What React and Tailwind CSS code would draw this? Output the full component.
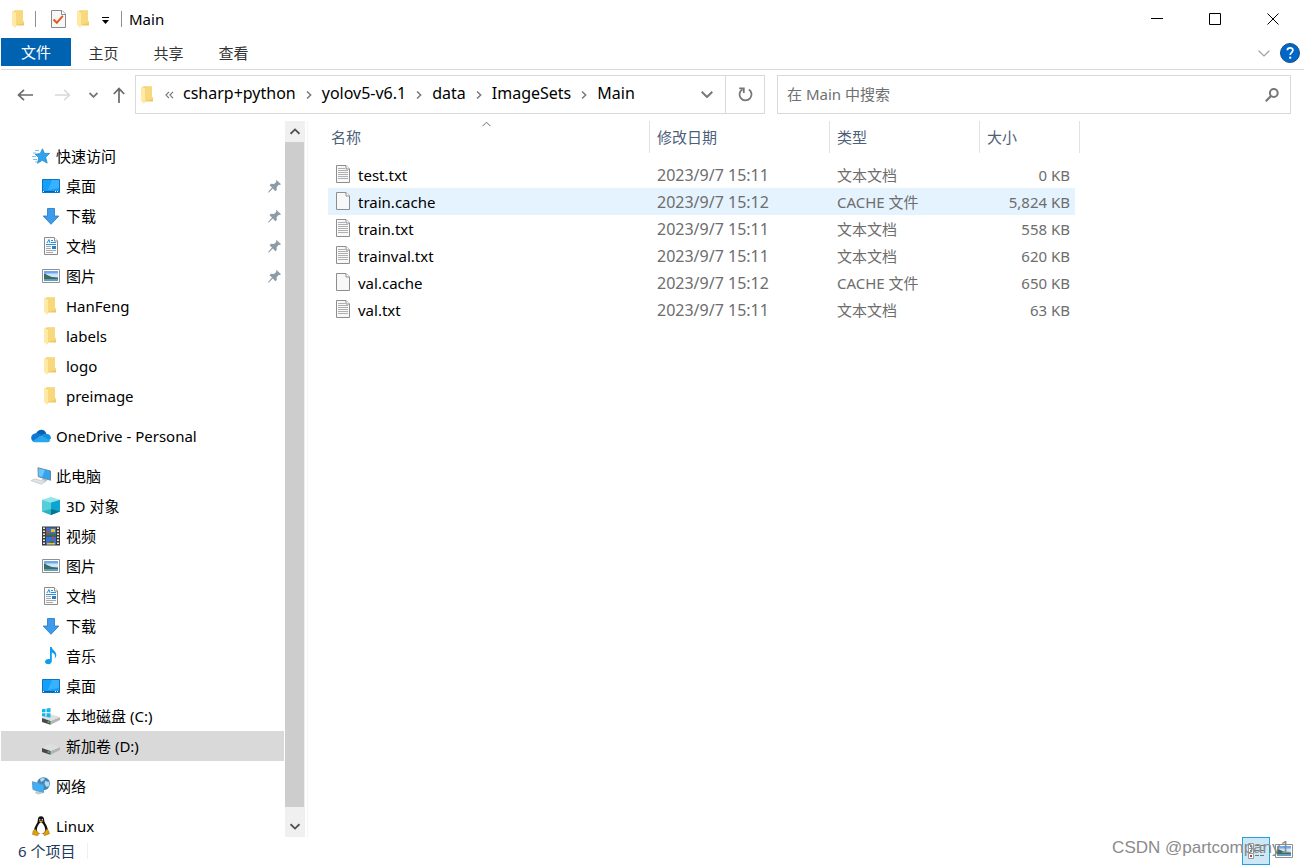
import { useState } from "react";

/* ================= DATA ================= */

const GROUPS = [
  {
    name: "快速访问",
    icon: StarIcon,
    items: [
      { name: "桌面", icon: DesktopIcon, pinned: true },
      { name: "下载", icon: DownloadIcon, pinned: true },
      { name: "文档", icon: DocumentIcon, pinned: true },
      { name: "图片", icon: PictureIcon, pinned: true },
      { name: "HanFeng", icon: FolderIcon },
      { name: "labels", icon: FolderIcon },
      { name: "logo", icon: FolderIcon },
      { name: "preimage", icon: FolderIcon },
    ],
  },
  { name: "OneDrive - Personal", icon: OneDriveIcon, items: [] },
  {
    name: "此电脑",
    icon: ComputerIcon,
    items: [
      { name: "3D 对象", icon: CubeIcon },
      { name: "视频", icon: VideoIcon },
      { name: "图片", icon: PictureIcon },
      { name: "文档", icon: DocumentIcon },
      { name: "下载", icon: DownloadIcon },
      { name: "音乐", icon: MusicIcon },
      { name: "桌面", icon: DesktopIcon },
      { name: "本地磁盘 (C:)", icon: SystemDriveIcon },
      { name: "新加卷 (D:)", icon: DriveIcon, selected: true },
    ],
  },
  { name: "网络", icon: NetworkIcon, items: [] },
  { name: "Linux", icon: LinuxIcon, items: [] },
];

const PATH = ["csharp+python", "yolov5-v6.1", "data", "ImageSets", "Main"];

const FILES = [
  { name: "test.txt", date: "2023/9/7 15:11", type: "文本文档", size: "0 KB" },
  { name: "train.cache", date: "2023/9/7 15:12", type: "CACHE 文件", size: "5,824 KB" },
  { name: "train.txt", date: "2023/9/7 15:11", type: "文本文档", size: "558 KB" },
  { name: "trainval.txt", date: "2023/9/7 15:11", type: "文本文档", size: "620 KB" },
  { name: "val.cache", date: "2023/9/7 15:12", type: "CACHE 文件", size: "650 KB" },
  { name: "val.txt", date: "2023/9/7 15:11", type: "文本文档", size: "63 KB" },
];

/* ================= PAGE ================= */

export default function App() {
  const [active, setActive] = useState("train.cache");

  return (
    <div className="relative flex min-h-screen flex-col bg-white pl-px font-['Noto_Sans','Noto_Sans_CJK_SC',sans-serif] text-[15px] leading-5 text-black">
      <TitleBar />
      <Ribbon />
      <AddressRow />

      <div className="flex flex-1">
        <Sidebar />
        <main className="flex-1 border-l border-[#f5f5f5] pl-5">
          <FileTable active={active} onPick={setActive} />
        </main>
      </div>

      <StatusBar />
      <div className="pointer-events-none absolute right-[14px] bottom-[9px] font-['Liberation_Sans',sans-serif] text-[17px] text-[#8b8b8b]">
        CSDN @partcompany1
      </div>
    </div>
  );
}

/* ================= TOP BARS ================= */

function TitleBar() {
  return (
    <header className="flex h-[38px] items-center pl-[11px]">
      <FolderIcon />
      <span className="ml-[11px] h-4 w-px bg-[#8f8f8f]" />
      <button aria-label="属性" className="ml-[15px]">
        <CheckDocIcon />
      </button>
      <button aria-label="新建文件夹" className="ml-[11px]">
        <FolderIcon />
      </button>
      <button aria-label="自定义快速访问工具栏" className="ml-3">
        <svg className="block h-[18px] w-2" viewBox="0 0 8 18">
          <path d="M1 7.500h7" stroke="#000" />
          <path d="M1 10h7l-3.500 4z" fill="#000" />
        </svg>
      </button>
      <span className="ml-3 h-4 w-px bg-[#8f8f8f]" />
      <h1 className="ml-[7px]">Main</h1>

      <div className="mr-[2px] ml-auto flex h-full">
        <WindowButton label="最小化" d="M0 5.500h12" />
        <WindowButton label="最大化" d="M.5.5h11v11H.5z" />
        <WindowButton label="关闭" d="M.5.5l11 11M11.500.5l-11 11" />
      </div>
    </header>
  );
}

function WindowButton({ label, d }) {
  return (
    <button aria-label={label} className="flex w-[58px] items-center justify-center hover:bg-[#e5e5e5]">
      <svg className="size-3" viewBox="0 0 12 12" fill="none" stroke="#000">
        <path d={d} />
      </svg>
    </button>
  );
}

function Ribbon() {
  return (
    <div className="flex h-8 items-start border-b border-[#dadbdc]">
      <button className="h-7 w-[70px] bg-[#0063b1] text-white">文件</button>
      {["主页", "共享", "查看"].map((t) => (
        <button key={t} className="h-[30px] w-[65px] text-[#333]">{t}</button>
      ))}
      <div className="mr-1 ml-auto flex h-[30px] items-center gap-[10px]">
        <button aria-label="展开功能区">
          <Chevron className="h-[7px] w-3" color="#a0a0a0" width="1.200" />
        </button>
        <button aria-label="帮助">
          <svg className="block size-5" viewBox="0 0 20 20">
            <circle cx="10" cy="10" r="9.500" fill="#0067c8" stroke="#1b4f86" />
            <path d="M7.300 7.300c.2-3.300 5.700-3.200 5.600 0 0 2-2.700 2.100-2.700 4.800" fill="none" stroke="#fff" strokeWidth="1.700" />
            <path d="M9.200 13.700h2v2h-2z" fill="#fff" />
          </svg>
        </button>
      </div>
    </div>
  );
}

function AddressRow() {
  return (
    <div className="flex items-center pt-[5px] pr-[13px] pb-[7px] pl-4">
      <button aria-label="后退">
        <svg className="block h-4 w-4" viewBox="0 0 16 16" fill="none" stroke="#6a6a6a" strokeWidth="1.700">
          <path d="M16 8H1.500M7 2.800L1.500 8 7 13.200" />
        </svg>
      </button>
      <button aria-label="前进" disabled className="ml-[22px]">
        <svg className="block h-4 w-4" viewBox="0 0 16 16" fill="none" stroke="#d8d8d8" strokeWidth="1.500">
          <path d="M0 8h14.500M9 2.800L14.500 8 9 13.200" />
        </svg>
      </button>
      <button aria-label="最近浏览的位置" className="ml-[18px]">
        <Chevron className="h-[6px] w-[9px]" color="#777" width="2.400" />
      </button>
      <button aria-label="上移" className="ml-[15px]">
        <svg className="block h-[18px] w-3" viewBox="0 0 12 18" fill="none" stroke="#6a6a6a" strokeWidth="1.700">
          <path d="M6 17V3M.8 8L6 2.600 11.200 8" />
        </svg>
      </button>

      <nav aria-label="地址" className="ml-[10px] flex h-[39px] flex-1 items-center border border-[#d9d9d9] pl-[5px] text-base leading-5">
        <FolderIcon />
        <svg className="mr-[9px] ml-3 h-2 w-[9px]" viewBox="0 0 9 8" fill="none" stroke="#777" strokeWidth="1.200">
          <path d="M4 .8L1 4l3 3.200M8 .8L5 4l3 3.200" />
        </svg>
        {PATH.map((p, i) => (
          <span key={i} className="flex items-center">
            {i > 0 && (
              <svg className="mx-[10px] h-[10px] w-[6px]" viewBox="0 0 7 10" fill="none" stroke="#777" strokeWidth="1.700">
                <path d="M1.200.8L5.500 5 1.200 9.200" />
              </svg>
            )}
            <a href="#" className="pb-[3px]">{p}</a>
          </span>
        ))}
        <button aria-label="以前的位置" className="mr-[12px] ml-auto">
          <Chevron className="h-[7px] w-3" color="#777" width="2" />
        </button>
        <button aria-label="刷新" className="flex h-full w-[39px] items-center justify-center border-l border-[#d9d9d9]">
          <svg className="size-[15px]" viewBox="0 0 15 15" fill="none" stroke="#777" strokeWidth="1.800">
            <path d="M10.800 2.400A6 6 0 1 1 4.600 2.200" />
            <path d="M1.200 1.400h4.600V6" />
          </svg>
        </button>
      </nav>

      <label className="ml-3 flex h-[39px] w-[514px] items-center border border-[#d9d9d9] pr-[11px] pl-[9px]">
        <input
          type="text"
          aria-label="搜索"
          placeholder="在 Main 中搜索"
          className="min-w-0 flex-1 pb-[2px] outline-none placeholder:text-[#707070]"
        />
        <svg className="size-[14px]" viewBox="0 0 14 14" fill="none" stroke="#777">
          <circle cx="8.800" cy="5" r="3.900" strokeWidth="2" />
          <path d="M6 8L.8 13.200" strokeWidth="2.200" />
        </svg>
      </label>
    </div>
  );
}

/* ================= SIDEBAR ================= */

function Sidebar() {
  return (
    <aside className="flex h-[716px] w-[306px]">
      <div className="flex w-[284px] flex-col gap-[10px] overflow-hidden pt-5">
        {GROUPS.map((g) => (
          <ul key={g.name} className="shrink-0">
            <NavItem item={g} top />
            {g.items.map((item) => (
              <NavItem key={item.name} item={item} />
            ))}
          </ul>
        ))}
      </div>
      <div className="flex w-5 flex-col bg-[#f0f0f0]">
        <button aria-label="向上滚动" className="flex h-[21px] w-[19px] items-center justify-center">
          <Chevron className="h-[7px] w-[10px] rotate-180" color="#505050" width="2.200" />
        </button>
        <div className="w-[19px] flex-1 bg-[#cdcdcd]" />
        <button aria-label="向下滚动" className="flex h-[30px] w-[19px] items-center justify-center pt-2">
          <Chevron className="h-[7px] w-[10px]" color="#505050" width="2.200" />
        </button>
      </div>
    </aside>
  );
}

function NavItem({ item, top }) {
  const Icon = item.icon;
  return (
    <li className={item.selected ? "mr-px bg-[#d9d9d9]" : "mr-px"}>
      <a href="#" className={`flex h-[30px] items-center gap-[5px] pr-[3px] ${top ? "pl-[30px]" : "pl-10"}`}>
        <span className={`flex w-5 justify-center ${Icon === FolderIcon ? "pr-[2px]" : ""}`}>
          <Icon />
        </span>
        <span>{item.name}</span>
        {item.pinned && <PinIcon />}
      </a>
    </li>
  );
}

/* ================= FILE LIST ================= */

function FileTable({ active, onPick }) {
  return (
    <table className="w-[752px] table-fixed text-left">
      <colgroup>
        <col className="w-[322px]" />
        <col className="w-[180px]" />
        <col className="w-[150px]" />
        <col className="w-[95px]" />
        <col />
      </colgroup>
      <thead className="text-[#4c607a]">
        <tr>
          <HeadCell className="relative pl-[3px]">
            名称
            <svg className="absolute top-0 left-[154px] h-[6px] w-[9px]" viewBox="0 0 9 6" fill="none" stroke="#6a6a6a">
              <path d="M.5 5.200l4-4 4 4" />
            </svg>
          </HeadCell>
          <HeadCell className="pl-[7px]">修改日期</HeadCell>
          <HeadCell className="pl-[7px]">类型</HeadCell>
          <HeadCell className="pl-[7px]" span={2}>大小</HeadCell>
        </tr>
      </thead>
      <tbody className="text-[#6d6d6d]">
        {FILES.map((f) => {
          const bg = f.name === active ? "bg-[#e5f3ff]" : "";
          return (
            <tr key={f.name} className="h-[27px]" onClick={() => onPick(f.name)}>
              <td className={`pl-2 text-black ${bg}`}>
                <span className="flex items-center gap-[8px]">
                  <FileIcon lined={f.name.endsWith(".txt")} />
                  {f.name}
                </span>
              </td>
              <td className={`pl-[7px] text-base leading-5 ${bg}`}>{f.date}</td>
              <td className={`pl-[7px] ${bg}`}>{f.type}</td>
              <td className={`pr-[5px] text-right whitespace-nowrap ${bg}`}>{f.size}</td>
              <td />
            </tr>
          );
        })}
      </tbody>
    </table>
  );
}

function HeadCell({ children, className = "", span = 1 }) {
  return (
    <th colSpan={span} className="pb-2 font-normal">
      <div className={`flex h-8 items-center border-r border-[#e2e2e2] ${className}`}>{children}</div>
    </th>
  );
}

function StatusBar() {
  return (
    <footer className="flex h-[30px] items-center pr-[11px] pb-[2px] pl-[17px] text-[#1e3a5f]">
      <span>6 个项目</span>
      <span className="ml-3 h-4 w-px bg-[#f0f0f0]" />
      <div className="ml-auto flex items-center">
        <button aria-label="详细信息" className="flex size-7 items-center justify-center border border-[#26a0da] bg-[#cce8f7]">
          <svg className="size-4" viewBox="0 0 16 16">
            <path d="M.5.5h5v5h-5zM.5 5.500h5v5h-5zM.5 10.500h5v5h-5z" fill="#fff" stroke="#999" />
            <path d="M2 2h2v2H2z" fill="#3b8ac4" />
            <path d="M2 7h2v2H2z" fill="#4f9b4f" />
            <path d="M2 12h2v2H2z" fill="#c33" />
            <path d="M7 2.500h4M12 2.500h4M7 7.500h4M12 7.500h4M7 12.500h4M12 12.500h4" stroke="#777" />
          </svg>
        </button>
        <button aria-label="大缩略图" className="ml-[5px]">
          <PictureIcon />
        </button>
      </div>
    </footer>
  );
}

/* ================= ICONS ================= */

function Chevron({ className, color, width }) {
  return (
    <svg className={`block ${className}`} viewBox="0 0 12 7" fill="none" stroke={color} strokeWidth={width}>
      <path d="M.7.8L6 6 11.300.8" />
    </svg>
  );
}

function FolderIcon() {
  return (
    <svg className="block h-[18px] w-3" viewBox="0 0 12 18">
      <path d="M2 .5h9v10.500h1V15.500H2z" fill="#efc75e" />
      <path d="M4 .5h7v10.500h1V13L4 15z" fill="#f7d87c" />
      <path d="M0 .5l4 1.700v14.600L3 17.800 0 15z" fill="#ffe9a6" />
    </svg>
  );
}

function CheckDocIcon() {
  return (
    <svg className="block h-[18px] w-[15px]" viewBox="0 0 15 18">
      <path d="M.5.5H11L14.500 4v13.500H.5z" fill="#f7f7f7" stroke="#8a8a8a" />
      <path d="M10.500.5V4.500h4" fill="#fff" stroke="#8a8a8a" />
      <path d="M2.500 9.500l3.300 3.300 6-7" fill="none" stroke="#e8581c" strokeWidth="2" />
    </svg>
  );
}

function FileIcon({ lined }) {
  return (
    <svg className="mb-[2px] block h-[18px] w-[14px]" viewBox="0 0 14 18">
      <path d="M.5.5H10L13.500 4v13.500H.5z" fill="#f8f8f8" stroke="#8e8e8e" />
      <path d="M10 .5V4h3.500" fill="#fff" stroke="#8e8e8e" />
      {lined && <path d="M2 3.500h7M2 5.500h10M2 7.500h10M2 9.500h10M2 11.500h10M2 13.500h10" stroke="#b0b0b0" />}
    </svg>
  );
}

function PinIcon() {
  return (
    <svg className="ml-auto block size-[13px]" viewBox="0 0 13 13">
      <path d="M8.500 0L13 4.300l-1.200.7-1-.2-2.200 2.400.2 2.800-1.500 1.200-2.500-2.700L.6 12.700l-.5-.6L4 7.500 1.500 5.200 3 3.700l3 .3L8.300 2 8 .8z" fill="#8e9ba6" />
    </svg>
  );
}

function StarIcon() {
  return (
    <svg className="block h-4 w-[18px]" viewBox="0 0 18 16">
      <path d="M10.500.8l2 4.700 5.200-.2-4 4 1.500 5.800-5-2.800-4.700 3 1.200-5.600-3.500-3.500 5-.7z" fill="#2fa4ec" stroke="#1b7fc4" strokeWidth=".7" />
      <path d="M3 2.500h4M1 5h3M0 8.500h4M1 11.500h4M3 14h2" stroke="#79c2f0" />
    </svg>
  );
}

function DesktopIcon() {
  return (
    <svg className="block h-[14px] w-[18px]" viewBox="0 0 18 14">
      <path d="M.5.5h17v13H.5z" fill="#12a0fb" stroke="#0f74c0" />
      <path d="M10 1h7v8L6 11z" fill="#38b2ff" />
      <path d="M1 12.500h16" stroke="#0a64aa" />
      <path d="M1 12.500h1M13 12.500h1M15 12.500h1" stroke="#fff" />
    </svg>
  );
}

function DownloadIcon() {
  return (
    <svg className="block h-[17px] w-[18px]" viewBox="0 0 18 17">
      <path d="M5.500.5h7v7.500h4.300L9 16.300 1.200 8h4.300z" fill="#3d9be9" stroke="#2279c8" strokeWidth=".8" />
    </svg>
  );
}

function DocumentIcon() {
  return (
    <svg className="block h-[18px] w-[14px]" viewBox="0 0 14 18">
      <path d="M.5.5H10L13.500 4v13.500H.5z" fill="#fbfbfb" stroke="#8b8b8b" />
      <path d="M10.500.5V4h3" fill="#fff" stroke="#8b8b8b" />
      <path d="M3 6l2-3.500L6 6M7 3.500h2M7 5.500h5M2 7.500h10" fill="none" stroke="#2492e0" />
      <path d="M2 9.500h5M2 11.500h5M2 13.500h10M2 15.500h7" stroke="#a8a8a8" />
      <path d="M8 9h4v3H8z" fill="#2f7fc1" />
    </svg>
  );
}

function PictureIcon() {
  return (
    <svg className="block h-[14px] w-[18px]" viewBox="0 0 18 14">
      <path d="M.5.5h17v13H.5z" fill="#fff" stroke="#909090" />
      <path d="M2 2h14v10H2z" fill="#6fa9ec" />
      <path d="M4 4.500h12v3.500H4z" fill="#cfe6f7" />
      <path d="M2 5c3 0 4 2 8 3l6 1v1H2z" fill="#3f6b62" />
      <path d="M2 10h14v2H2z" fill="#5fa0bd" />
    </svg>
  );
}

function OneDriveIcon() {
  return (
    <svg className="block h-[14px] w-5" viewBox="0 0 20 14">
      <path d="M5 4.500C7-.5 14-1 15.500 5L10 8z" fill="#0a5fb5" />
      <path d="M5.500 4c2 0 3.500 1 5 2L3 13C-.5 12-1 6 3 4.700z" fill="#0e78d4" />
      <path d="M15.500 5c3 0 4.500 2 4.500 4.500l-3 2.500L10 6.500c2-1.500 4-2 5.500-1.500z" fill="#1490df" />
      <path d="M10.500 6.500l8.800 5c-.8 1.300-1.800 1.800-3 1.800H4.500c-1.300 0-2.300-.5-3-1.300z" fill="#28a8ea" />
    </svg>
  );
}

function ComputerIcon() {
  return (
    <svg className="block h-[18px] w-5" viewBox="0 0 20 18">
      <path d="M12 11l4.500 1.800-1 1.700-5-1.500z" fill="#b9c3ca" />
      <path d="M7 .8l12.500 3.200v9.200L7.300 9.600z" fill="#2fa6f3" stroke="#6d8799" />
      <path d="M7.600 1.500L14 3l-3 7-3.300-1z" fill="#6cc6fb" />
      <path d="M0 13.500l4-1.500 10.500 2.800-4.500 2.400z" fill="#e0e4e7" stroke="#bcc3c8" strokeWidth=".7" />
    </svg>
  );
}

function CubeIcon() {
  return (
    <svg className="block size-[18px]" viewBox="0 0 18 18">
      <path d="M0 2.800L9 0l9 2.800L9 5.500z" fill="#8ce6ea" />
      <path d="M0 2.800L9 5.500V18L0 14.500z" fill="#55ced9" />
      <path d="M18 2.800L9 5.500V18l9-3.500z" fill="#0fa3d0" />
      <path d="M0 14.500L9 12v6z" fill="#27b3c4" />
      <path d="M18 14.500L9 12v6z" fill="#07758f" />
    </svg>
  );
}

function VideoIcon() {
  return (
    <svg className="block h-5 w-[18px]" viewBox="0 0 18 20">
      <path d="M0 .5h18v19H0z" fill="#3a3a3a" />
      <path d="M2 1.500v18M16 1.500v18" stroke="#e6e6e6" strokeWidth="2" strokeDasharray="1.500 1.500" />
      <path d="M4 1.500h10v8H4zM4 10.500h10v8H4z" fill="#3f6fd0" />
      <path d="M9 3h4v3H9zM5 17h8v1.500H5z" fill="#f0c419" />
      <path d="M4 5h3v2H4zM10 10.500h2v2h-2z" fill="#d8402b" />
      <path d="M4 7.500h10v2H4zM8 15h3v2H8z" fill="#3f7a2c" />
    </svg>
  );
}

function MusicIcon() {
  return (
    <svg className="block size-[18px]" viewBox="0 0 18 18">
      <path d="M8 0h1.800c.4 3.500 4.700 4 4.500 8.200-.1 1.400-.8 2.300-1.600 3.300.8-3 .2-5-2.900-6V14c0 2-1.500 3.200-3.500 3.200S3 16.300 3 14.800c0-1.800 2.300-3.200 5-2.600z" fill="#109cf5" />
    </svg>
  );
}

function DriveBody() {
  return (
    <>
      <path d="M18 10v3l-9.500 4.800V14z" fill="#b4b4b6" />
      <path d="M0 11l8-4 10 3-9.500 4z" fill="#dfdfe2" />
      <path d="M0 11l8.500 3v3.800L0 15z" fill="#484848" />
      <path d="M5.500 14l2 .6v1.600l-2-.6z" fill="#39d353" />
    </>
  );
}

function DriveIcon() {
  return (
    <svg className="block size-[18px]" viewBox="0 0 18 18">
      <DriveBody />
    </svg>
  );
}

function SystemDriveIcon() {
  return (
    <svg className="block size-[18px]" viewBox="0 0 18 18">
      <DriveBody />
      <path d="M0 2.200L3.500 1.700v3.500H0zM4.500 1.600L8.500 1v4.200h-4zM0 6.200h3.500v3.600L0 9.300zM4.500 6.200h4v4.300l-4-.6z" fill="#14b4ef" />
    </svg>
  );
}

function NetworkIcon() {
  return (
    <svg className="block h-[18px] w-5" viewBox="0 0 20 18">
      <circle cx="12.500" cy="6.700" r="6.500" fill="#3f86b8" />
      <path d="M9 2c2-1.500 4-1 5 0l-2 2-2 1zM14 4l4 1 .5 4-3 1-2-3z" fill="#b5dbea" />
      <path d="M5 14l5 1.300 2 1.200-5 1-3-1.500z" fill="#c2cad0" />
      <path d="M1.500 4.700L12.500 8v7.500L2 12.500z" fill="#3fb0f7" stroke="#5d9cc4" />
    </svg>
  );
}

function LinuxIcon() {
  return (
    <svg className="block h-5 w-[18px]" viewBox="0 0 18 20">
      <path d="M9 .3c2.400 0 3.200 1.700 3.200 4 0 2.700 3.600 5.500 3.600 10L13 18H5l-2.800-3.700c0-4 3.600-6.700 3.600-10C5.800 2 6.600.3 9 .3z" fill="#111" />
      <path d="M9 6.500c1.700 0 4.200 4.500 4.200 7.500 0 2.400-2.200 4-4.200 4s-4.200-1.600-4.200-4c0-3 2.500-7.500 4.200-7.500z" fill="#fff" />
      <path d="M7.300 3h1v1.500h-1zM9.800 3h1v1.500h-1z" fill="#fff" />
      <path d="M7 5.500l2-.8 2 .8-2 1.500z" fill="#e9a90c" />
      <path d="M3 13l4 4.500-1.500 2.200-5-1.200.6-3.500zM15 13l-3.700 4.500 1.200 2.200 5-2-1-3.200z" fill="#e0a010" stroke="#9a6c06" strokeWidth=".5" />
    </svg>
  );
}
